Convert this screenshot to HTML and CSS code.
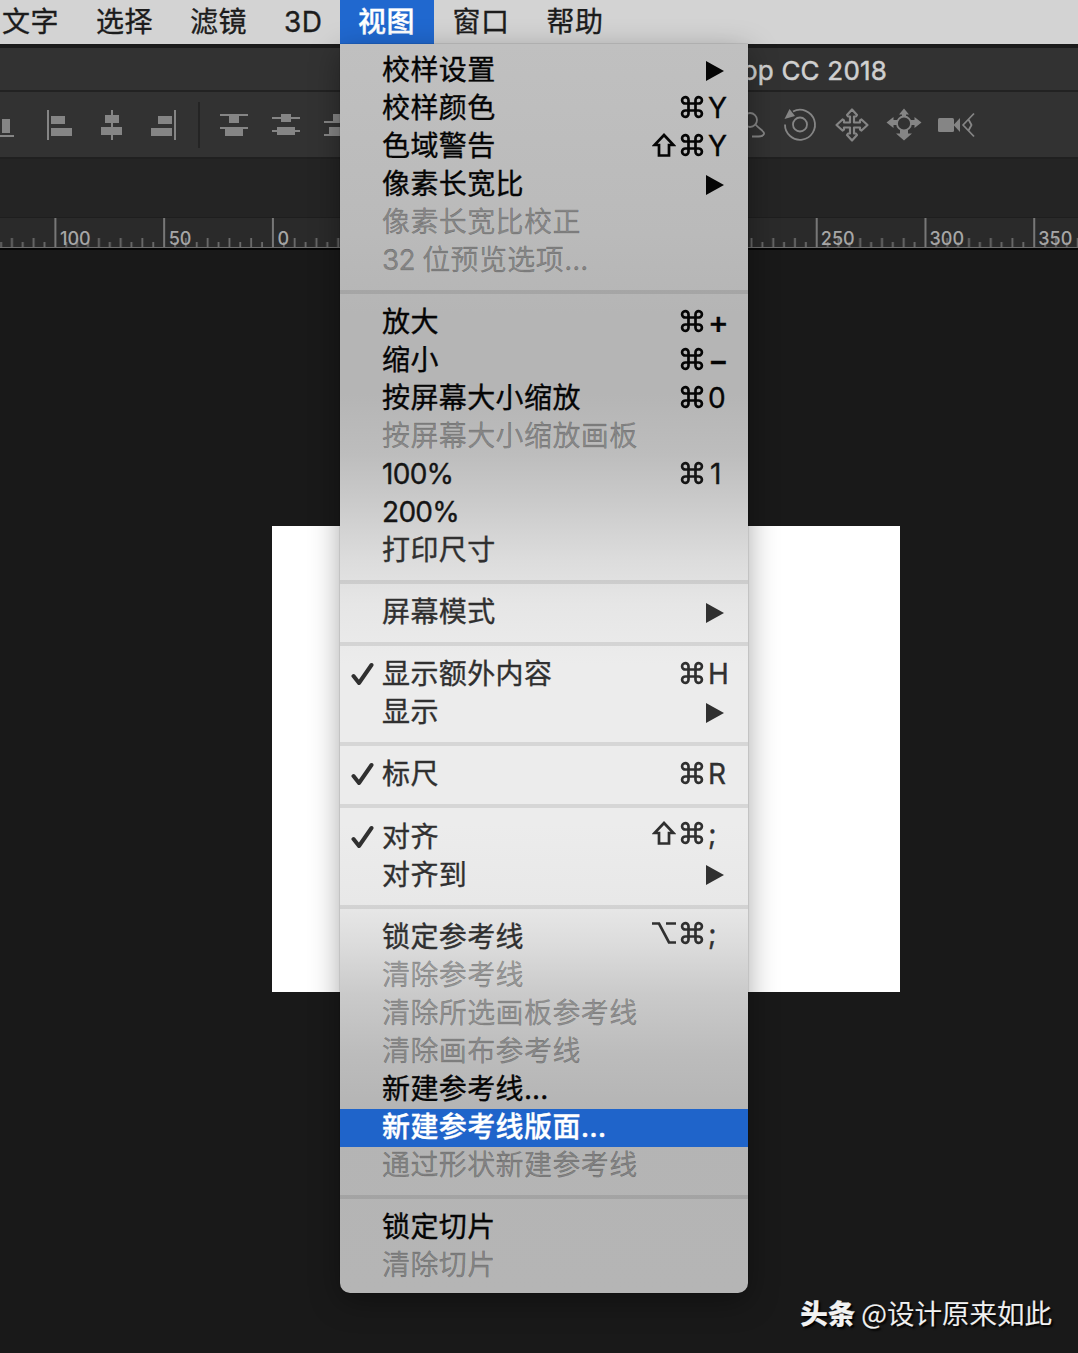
FILE: index.html
```html
<!DOCTYPE html>
<html lang="zh-CN">
<head>
  <meta charset="UTF-8" />
  <meta name="viewport" content="width=device-width, initial-scale=1.0" />
  <title>视图</title>
  <link rel="stylesheet" href="styles.css">
</head>
<body>
  <svg class="defs">
    <symbol id="cmd" viewBox="0 0 24 24"><path d="M8.500 8.500h7v7h-7zM8.500 8.500H5.500a3.200 3.200 0 1 1 3-3.200zM15.500 8.500h3a3.200 3.200 0 1 0-3-3.200zM8.500 15.500h-3a3.200 3.200 0 1 0 3 3.200zM15.500 15.500h3a3.200 3.200 0 1 1-3 3.200z"/></symbol>
    <symbol id="shift" viewBox="0 0 24 24"><path d="M12 2L21.500 12H17v10.500H7V12H2.500z"/></symbol>
    <symbol id="opt" viewBox="0 0 24 24"><path d="M0 2.500h7L17 21.500h7M14 2.500h10"/></symbol>
    <symbol id="check" viewBox="0 0 24 24"><path d="M2.500 14l5.500 7L20.500 3"/></symbol>
  </svg>

  <nav class="menubar">
    <span class="menubar-item">文字</span>
    <span class="menubar-item">选择</span>
    <span class="menubar-item">滤镜</span>
    <span class="menubar-item">3D</span>
    <div class="menubar-item open">视图
      <div class="menu">
        <div class="item"><span>校样设置</span><i class="arrow"></i></div>
        <div class="item"><span>校样颜色</span><kbd><svg class="key"><use href="#cmd"/></svg><b>Y</b></kbd></div>
        <div class="item"><span>色域警告</span><kbd><svg class="key"><use href="#shift"/></svg><svg class="key"><use href="#cmd"/></svg><b>Y</b></kbd></div>
        <div class="item"><span>像素长宽比</span><i class="arrow"></i></div>
        <div class="item disabled"><span>像素长宽比校正</span></div>
        <div class="item disabled"><span><span class="latin">32 </span>位预览选项<span class="dots">...</span></span></div>
        <hr>
        <div class="item"><span>放大</span><kbd><svg class="key"><use href="#cmd"/></svg><b class="sign">+</b></kbd></div>
        <div class="item"><span>缩小</span><kbd><svg class="key"><use href="#cmd"/></svg><b class="sign">−</b></kbd></div>
        <div class="item"><span>按屏幕大小缩放</span><kbd><svg class="key"><use href="#cmd"/></svg><b>0</b></kbd></div>
        <div class="item disabled"><span>按屏幕大小缩放画板</span></div>
        <div class="item soft"><span class="latin">100%</span><kbd><svg class="key"><use href="#cmd"/></svg><b class="one">1</b></kbd></div>
        <div class="item soft"><span class="latin">200%</span></div>
        <div class="item light"><span>打印尺寸</span></div>
        <hr>
        <div class="item light"><span>屏幕模式</span><i class="arrow"></i></div>
        <hr>
        <div class="item light checked"><svg class="check"><use href="#check"/></svg><span>显示额外内容</span><kbd><svg class="key"><use href="#cmd"/></svg><b>H</b></kbd></div>
        <div class="item light"><span>显示</span><i class="arrow"></i></div>
        <hr>
        <div class="item light checked"><svg class="check"><use href="#check"/></svg><span>标尺</span><kbd><svg class="key"><use href="#cmd"/></svg><b>R</b></kbd></div>
        <hr>
        <div class="item light checked"><svg class="check"><use href="#check"/></svg><span>对齐</span><kbd class="raised"><svg class="key"><use href="#shift"/></svg><svg class="key"><use href="#cmd"/></svg><b>;</b></kbd></div>
        <div class="item light"><span>对齐到</span><i class="arrow"></i></div>
        <hr>
        <div class="item light"><span>锁定参考线</span><kbd class="raised"><svg class="key"><use href="#opt"/></svg><svg class="key"><use href="#cmd"/></svg><b>;</b></kbd></div>
        <div class="item disabled"><span>清除参考线</span></div>
        <div class="item disabled"><span>清除所选画板参考线</span></div>
        <div class="item disabled"><span>清除画布参考线</span></div>
        <div class="item"><span>新建参考线<span class="dots">...</span></span></div>
        <div class="item selected"><span>新建参考线版面<span class="dots">...</span></span></div>
        <div class="item disabled"><span>通过形状新建参考线</span></div>
        <hr>
        <div class="item"><span>锁定切片</span></div>
        <div class="item disabled"><span>清除切片</span></div>
      </div>
    </div>
    <span class="menubar-item">窗口</span>
    <span class="menubar-item">帮助</span>
  </nav>

  <main class="app">
    <header class="titlebar">op CC 2018</header>

    <div class="options">
      <!-- align edges -->
      <svg class="tool cut" viewBox="18 0 34 65"><path d="M20 27h8v14h-8zM18 43h14v2H18z"/></svg>
      <svg class="tool" viewBox="0 0 52 65"><path d="M13 18h2v30h-2zM17 24h14v8H17zM17 36h21v8H17z"/></svg>
      <svg class="tool" viewBox="0 0 52 65"><path d="M25 18h2v30h-2zM19 23h14v8H19zM15 35h21v8H15z"/></svg>
      <svg class="tool" viewBox="0 0 52 65"><path d="M36 18h2v30h-2zM20 24h14v8H20zM13 36h21v8H13z"/></svg>
      <span class="divider"></span>
      <!-- distribute -->
      <svg class="tool" viewBox="0 0 52 65"><path d="M12 22h28v2H12zM21 24h10v7H21zM12 35h28v2H12zM17 37h18v7H17z"/></svg>
      <svg class="tool" viewBox="0 0 52 65"><path d="M12 25h28v2H12zM21 22h10v8H21zM12 38h28v2H12zM17 35h18v8H17z"/></svg>
      <svg class="tool" viewBox="0 0 52 65"><path d="M12 29h28v2H12zM21 22h10v7H21zM12 42h28v2H12zM17 35h18v7H17z"/></svg>
      <!-- 3D mode -->
      <div class="tools-3d">
        <svg class="tool line" viewBox="0 0 52 65"><circle cx="28" cy="28" r="7"/><path d="M33 32c4 5 10 7 9 10s-6 2.500-12 2.500"/></svg>
        <svg class="tool line" viewBox="0 0 52 65"><circle cx="26" cy="32.500" r="7"/><path d="M19 19.500a15 15 0 1 1-8 13"/><path class="fill" d="M15.500 17l5.500 7-10.500 3z"/></svg>
        <svg class="tool line bold" viewBox="0 0 52 65"><path d="M26 17.500l5 5.500-1 1.500h-2v6h6v-2l1.500-1 6 5.500-6 5.500-1.500-1v-2h-6v6h2l1 1.500-5 5.500-5-5.500 1-1.500h2v-6h-6v2l-1.500 1-6-5.500 6-5.500 1.500 1v2h6v-6h-2l-1-1.500z"/></svg>
        <svg class="tool line" viewBox="0 0 52 65"><path class="fill" d="M26 16.500l5 6h-3v4h-4v-4h-3zM26 48.500l8-7h-4v-4h-8v4h-4zM8.500 30.500l7-5.500v3h5v5h-5v3zM43.500 30.500l-7-5.500v3h-5v5h5v3z"/><circle class="hub" cx="26" cy="31.500" r="7"/></svg>
        <svg class="tool line" viewBox="0 0 52 65"><rect class="fill" x="8" y="26" width="16" height="14" rx="1.500"/><path class="fill" d="M23.500 33l6.500-7v14z"/><path d="M44 21.500L33 33l11 11.500M38.500 27.500l3 5.500-3 5.500"/></svg>
      </div>
    </div>

    <div class="tabs"></div>

    <div class="ruler">
      <svg class="ticks">
        <defs>
          <pattern id="ticks" x="54.400" y="0" width="108.760" height="30" patternUnits="userSpaceOnUse">
            <path class="major" d="M1 0v30"/>
            <path d="M11.900 24v6M22.700 20v10M33.600 24v6M44.500 20v10M55.400 24v6M66.300 20v10M77.100 24v6M88 20v10M98.900 24v6"/>
          </pattern>
        </defs>
        <rect width="100%" height="30" fill="url(#ticks)"/>
      </svg>
      <div class="labels">
        <span>100</span>
        <span>50</span>
        <span>0</span>
        <span class="gap"></span>
        <span>250</span>
        <span>300</span>
        <span>350</span>
      </div>
    </div>

    <section class="canvas">
      <div class="artboard"></div>
      <p class="credit"><strong>头条</strong>@设计原来如此</p>
    </section>
  </main>
</body>
</html>
```
FILE: styles.css
```css
* {
  box-sizing: border-box;
}

body {
  margin: 0;
  width: 1078px;
  height: 1353px;
  overflow: hidden;
  background: #191919;
  font-family: Inter, "Noto Sans CJK SC", sans-serif;
  font-size: 28px;
}

.defs {
  display: none;
}

.menubar {
  display: flex;
  height: 44px;
  background: #d3d3d3;
  color: #1c1c1c;
  line-height: 45px;
  letter-spacing: 0.4px;
  white-space: nowrap;
  -webkit-text-stroke: 0.35px;
}

.menubar-item {
  padding: 0 18.6px;
  width: 94px;
}

.menubar-item:first-child {
  padding-left: 2px;
  width: 77.500px;
}

.menubar-item:nth-child(4) {
  width: 74.500px;
}

.menubar-item.open {
  position: relative;
  padding-left: 18px;
  background: #2068cf;
  color: #fff;
  font-weight: 500;
}

/* dropdown */
.menu {
  position: absolute;
  z-index: 10;
  top: 44px;
  left: 0;
  width: 408px;
  height: 1249px;
  padding-top: 8px;
  border-radius: 0 0 10px 10px;
  background: linear-gradient(#c0c0c0 0, #bababa 190px, #b5b5b5 270px, #b5b5b5 350px, #bdbdbd 410px, #cbcbcb 460px, #dcdcdc 515px, #e6e6e6 560px, #ececec 620px, #ececec 780px, #e8e8e8 860px, #dcdcdc 900px, #cacaca 950px, #bcbcbc 1010px, #b4b4b4 1070px, #b5b5b5 100%);
  box-shadow: 0 0 1px rgba(0, 0, 0, 0.8), 0 8px 30px rgba(0, 0, 0, 0.35);
  color: #050505;
  font-weight: 400;
}

.item {
  display: flex;
  align-items: center;
  height: 38px;
  padding: 0 0 2px 42px;
  line-height: 36px;
}

.item.soft {
  color: #151515;
}

.item.light {
  color: #303030;
}

.item.disabled {
  color: rgba(0, 0, 0, 0.3);
}

.item.selected {
  background: #1f64ca;
  color: #fff;
  font-weight: 500;
}

.item.checked {
  padding-left: 11px;
}

.latin {
  letter-spacing: -0.7px;
}

.dots {
  letter-spacing: 0;
}

.check {
  width: 24px;
  height: 24px;
  margin-right: 7px;
  fill: none;
  stroke: currentColor;
  stroke-width: 4;
  stroke-linecap: round;
  stroke-linejoin: round;
}

.menu hr {
  height: 4px;
  margin: 10px 0 10.120px;
  border: 0;
  background: rgba(0, 0, 0, 0.09);
}

.arrow {
  margin: 1px 24px 0 auto;
  border: solid transparent;
  border-width: 10px 0 10px 18px;
  border-left-color: currentColor;
}

/* shortcuts: modifiers, then the key in a fixed column */
kbd {
  display: flex;
  align-items: center;
  margin-left: auto;
  padding-bottom: 1px;
  font: inherit;
}

kbd.raised {
  padding-bottom: 5px;
}

kbd b {
  width: 40px;
  padding-left: 0;
  font-weight: 400;
}

kbd .one {
  padding-left: 2px;
}

kbd .sign {
  font-size: 31px;
  font-weight: 500;
}

.key {
  width: 24px;
  height: 24px;
  margin: 0 4px 2px 0;
  fill: none;
  stroke: currentColor;
  stroke-width: 2.700;
}

/* app window */
.titlebar {
  height: 48px;
  padding-left: 742px;
  border-top: 4px solid #1b1b1b;
  border-bottom: 2px solid #222;
  background: #323232;
  color: #d0d0d0;
  font-size: 26px;
  line-height: 46px;
  letter-spacing: 0.2px;
  -webkit-text-stroke: 0.5px;
}

.options {
  display: flex;
  height: 67px;
  border-bottom: 2px solid #202020;
  background: #323232;
}

.tool {
  flex: none;
  width: 52px;
  height: 65px;
  fill: #858585;
}

.tool.cut {
  width: 34px;
}

.tool.line {
  fill: none;
  stroke: #858585;
  stroke-width: 1.800;
  stroke-linejoin: round;
}

.tool.bold {
  stroke-width: 2.200;
}

.tool .fill {
  fill: #858585;
  stroke: none;
}

.tool .hub {
  fill: #323232;
}

.divider {
  width: 2px;
  height: 46px;
  margin: 10px 8px;
  background: #242424;
}

.tools-3d {
  display: flex;
  margin-left: 358px;
}

.tabs {
  height: 59px;
  border-bottom: 1px solid #1e1e1e;
  background: #242424;
}

.ruler {
  display: grid;
  height: 32px;
  border-bottom: 2px solid #050505;
  background: #2a2a2a;
}

.ticks,
.labels {
  grid-area: 1 / 1;
}

.ticks {
  width: 100%;
  height: 30px;
  border-bottom: 1px solid #6c6c6c;
}

.ticks path {
  fill: none;
  stroke: #6c6c6c;
  stroke-width: 1.800;
}

.ticks .major {
  stroke: #808080;
}

.labels {
  display: flex;
  padding-left: 60px;
  color: #a6a6a6;
  font-size: 18px;
  font-weight: 500;
  line-height: 41px;
}

.labels span {
  flex: none;
  width: 108.700px;
}

.labels .gap {
  width: 434.800px;
}

.labels span:last-child {
  width: auto;
}

.canvas {
  display: flex;
  flex-direction: column;
  height: 1103px;
  padding: 276px 0 0 272px;
}

.artboard {
  flex: none;
  width: 628px;
  height: 466px;
  background: #fff;
}

.credit {
  margin: 299px 26px 0 auto;
  color: #f2f2f2;
  font-family: "Noto Sans CJK SC", sans-serif;
  font-size: 27.500px;
  font-weight: 350;
  line-height: 42px;
  text-shadow: 2px 2px 2px #000;
  -webkit-text-stroke: 0.2px;
}

.credit strong {
  margin-right: 6px;
  font-weight: 900;
}
```
